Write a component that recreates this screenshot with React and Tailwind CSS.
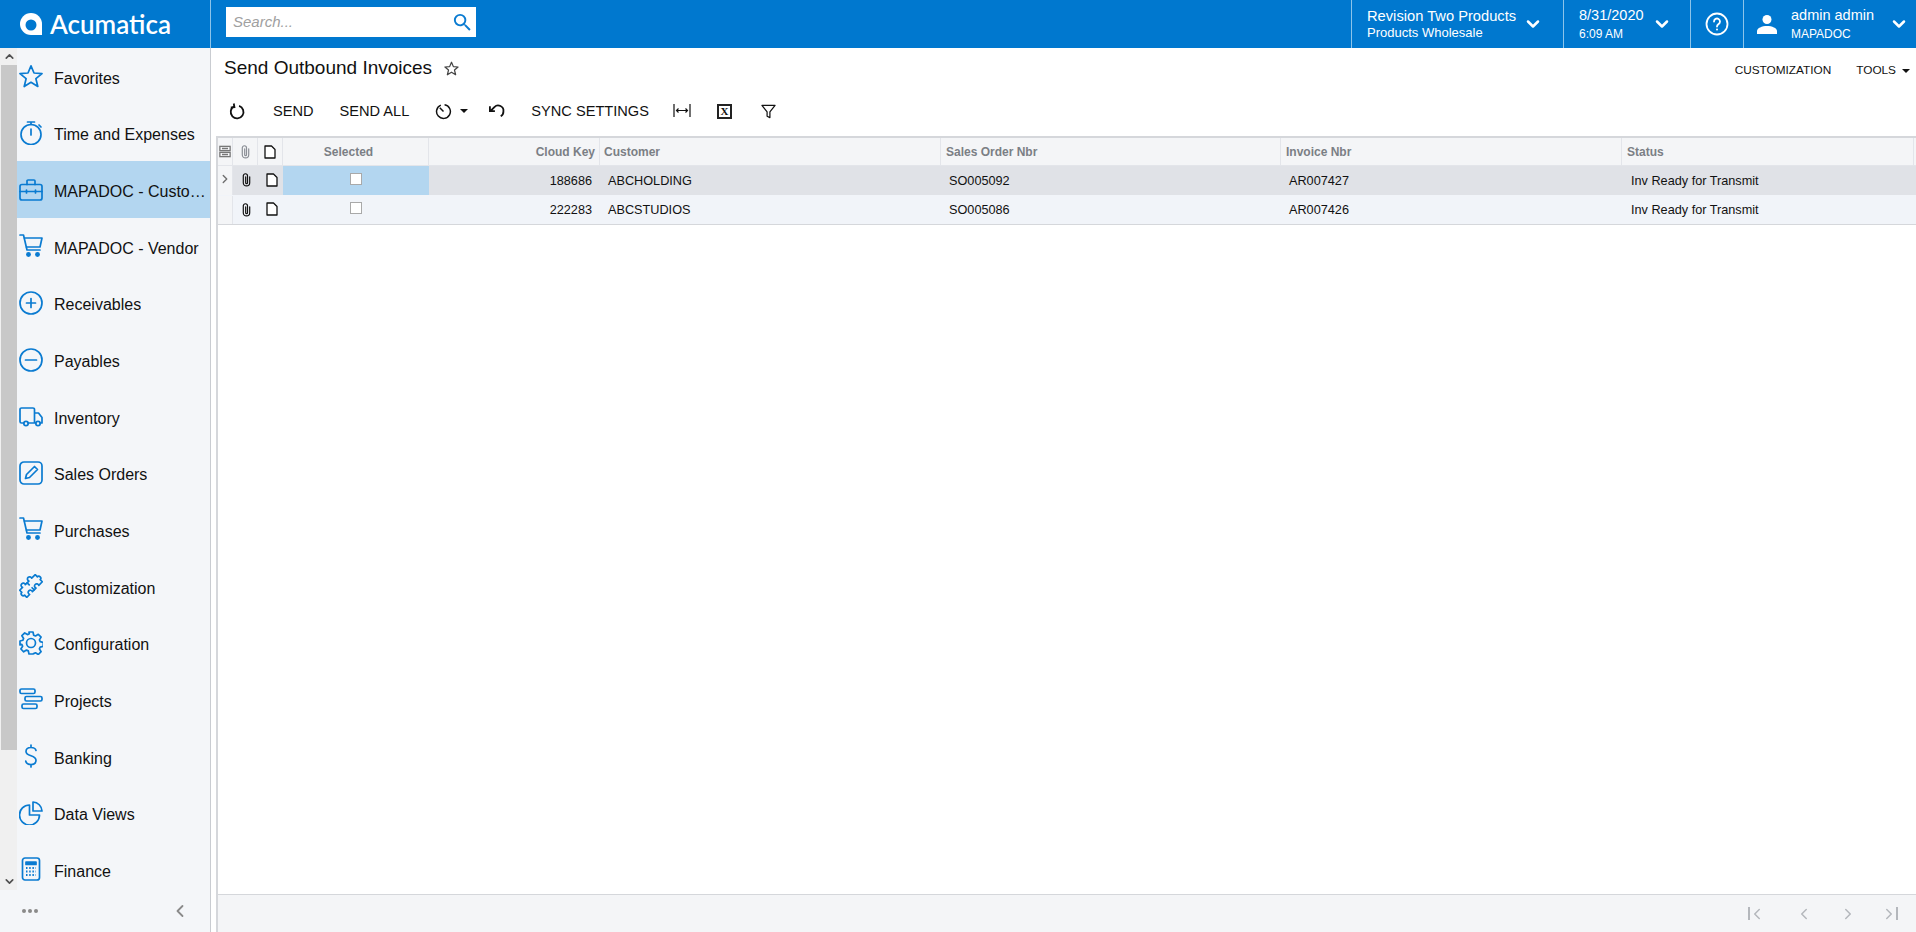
import { ChevronDown, ChevronUp, ChevronLeft, ChevronRight } from 'lucide-react'

const Ic = ({ children, className = 'h-6 w-6' }) => (
  <svg viewBox="0 0 24 24" fill="none" stroke="currentColor" strokeWidth="1.7" strokeLinecap="round" strokeLinejoin="round" className={className}>
    {children}
  </svg>
)

const cart = (
  <Ic>
    <path d="M1 1h3.500l3.500 15h13" />
    <path d="M5.500 4H23l-2 9H7.500" />
    <circle cx="9.500" cy="20.500" r="1.600" fill="currentColor" />
    <circle cx="18.500" cy="20.500" r="1.600" fill="currentColor" />
  </Ic>
)

const menu = [
  ['Favorites', <Ic><path d="M12 1.800l3 7.200 8 .6-6.100 5.100 1.900 7.800L12 18.300 5.200 22.500l1.900-7.800L1 9.600l8-.6z" /></Ic>],
  ['Time and Expenses', <Ic><circle cx="12" cy="13.500" r="10" /><path d="M8.500 1h7M12 1v2.500M12 8v6M20 4l2 2" /></Ic>],
  ['MAPADOC - Customization', <Ic><rect x="1" y="6.500" width="22" height="15.500" rx="2" /><path d="M8 6.500V3a1 1 0 0 1 1-1h6a1 1 0 0 1 1 1v3.500M1 13.500h6M17 13.500h6M7.500 12v3M16.500 12v3M7.500 13.500h9" /></Ic>],
  ['MAPADOC - Vendor', cart],
  ['Receivables', <Ic><circle cx="12" cy="12" r="11" /><path d="M12 7.500v9M7.500 12h9" /></Ic>],
  ['Payables', <Ic><circle cx="12" cy="12" r="11" /><path d="M6.500 12h11" /></Ic>],
  ['Inventory', <Ic className="-ml-[2px] h-6 w-7"><path d="M5 19H2.500A1.500 1.500 0 0 1 1 17.500V5.500A1.500 1.500 0 0 1 2.500 4H14a1.500 1.500 0 0 1 1.500 1.500V19H9M15.500 9h4l3.500 4.500V19h-2M15.500 19H17" /><circle cx="7" cy="19.500" r="2.200" /><circle cx="19" cy="19.500" r="2.200" /></Ic>],
  ['Sales Orders', <Ic><rect x="1" y="1" width="22" height="22" rx="4" /><path d="M6.500 17.500l1-4L15.500 5.500l3 3-8 8z" /></Ic>],
  ['Purchases', cart],
  ['Customization', <Ic><g transform="translate(12 12) rotate(-45)"><path d="M-11-5H-7a2.200 2.200 0 1 1 4 0H2a2.200 2.200 0 1 1 4 0H11V-2a2 2 0 1 1 0 4V5H6a2.200 2.200 0 1 0-4 0H-3a2.200 2.200 0 1 0-4 0H-11V2a2 2 0 1 1 0-4z" /><path d="M-.5-5v3M-.5 5V2" /></g></Ic>],
  ['Configuration', <Ic><circle cx="12" cy="12" r="4.500" /><path d="M10 1h4l.7 3.200 1.800.8 2.800-1.700 2.800 2.800-1.700 2.800.8 1.800 3 .7v4l-3 .7-.8 1.800 1.700 2.800-2.800 2.800-2.800-1.700-1.800.8L14 23h-4l-.7-3.100-1.800-.8-2.800 1.700-2.800-2.800 1.700-2.800-.8-1.800L1 14v-4l2.800-.7.8-1.800-1.700-2.800 2.800-2.800 2.800 1.700 1.800-.8z" /></Ic>],
  ['Projects', <Ic><rect x="1" y="2" width="15" height="4.500" rx="1.500" /><rect x="6" y="9.500" width="17" height="4.500" rx="1.500" /><rect x="3" y="17" width="15" height="4.500" rx="1.500" /></Ic>],
  ['Banking', <Ic><path d="M17 6.500C16.500 4.500 14.500 3.500 12 3.500c-3 0-5 1.500-5 4 0 2.200 2 3.300 5 4.300s5 2.200 5 4.500c0 2.500-2 4.200-5 4.200-2.700 0-4.700-1.200-5.200-3.300M12 1v2.500M12 20.500V23" /></Ic>],
  ['Data Views', <Ic><path d="M10.500 4A10 10 0 1 0 20.500 14H10.500z" /><path d="M14 1a9.500 9.500 0 0 1 9 9h-9z" /></Ic>],
  ['Finance', <Ic><rect x="3.500" y="1" width="17" height="22" rx="2.500" /><path d="M7 5h10v2.500H7z" fill="currentColor" /><path strokeWidth="2" strokeDasharray="1.500 1.700" strokeLinecap="butt" d="M7 11h10M7 14.500h10M7 18h10" /></Ic>],
]

const columns = 'grid grid-cols-[15px_25px_25px_146px_171px_341px_340px_341px_292px]'

const rows = [
  { key: '188686', customer: 'ABCHOLDING', order: 'SO005092', invoice: 'AR007427', active: true },
  { key: '222283', customer: 'ABCSTUDIOS', order: 'SO005086', invoice: 'AR007426' },
]

const Clip = ({ color }) => (
  <svg viewBox="0 0 12 16" fill="none" stroke={color} strokeWidth="1.300" strokeLinecap="round" className="h-[15px] w-[11px]">
    <path d="M9.500 5v6.500a3.500 3.500 0 0 1-7 0V4a2.300 2.300 0 0 1 4.600 0v7.500a1 1 0 0 1-2 0V5" />
  </svg>
)

const Doc = () => (
  <svg viewBox="0 0 12 14" fill="#fff" stroke="#111" strokeWidth="1.300" strokeLinejoin="round" className="h-[14px] w-[12px]">
    <path d="M1 1h6.500L11 4.500V13H1z" />
  </svg>
)

function Sidebar() {
  return (
    <aside className="flex h-full w-[211px] flex-none flex-col border-r border-[#c9ccd1] bg-[#f4f6f9]">
      <div className="flex min-h-0 flex-1">
        <div className="flex w-[17px] flex-none flex-col bg-[#f0f0f0] pl-px">
          <div className="flex h-[17px] items-center justify-center text-[#505050]">
            <ChevronUp size={13} strokeWidth={3} />
          </div>
          <div className="h-[685px] bg-[#c8c8c8]" />
          <div className="flex-1" />
          <div className="flex h-[17px] items-center justify-center text-[#505050]">
            <ChevronDown size={13} strokeWidth={3} />
          </div>
        </div>
        <nav className="min-w-0 flex-1 overflow-hidden">
          {menu.map(([label, icon], i) => (
            <div
              key={label}
              className={`flex h-[56.650px] items-center pl-[2px] pr-1 ${i === 2 ? 'bg-[#b3d6f0]' : ''}`}
            >
              <span className="flex w-[35px] flex-none justify-start text-[#0a7bd1]">{icon}</span>
              <span className="mt-[5px] truncate text-[16px] text-[#111]">{label}</span>
            </div>
          ))}
        </nav>
      </div>
      <div className="flex h-[42px] flex-none items-center justify-between pl-[22px] pr-[20px] text-[#8a8a8a]">
        <span className="flex gap-[2px]">
          <i className="h-1 w-1 rounded-full bg-[#8a8a8a]" />
          <i className="h-1 w-1 rounded-full bg-[#8a8a8a]" />
          <i className="h-1 w-1 rounded-full bg-[#8a8a8a]" />
        </span>
        <ChevronLeft size={20} strokeWidth={2.200} />
      </div>
    </aside>
  )
}

function TopBar() {
  return (
    <header className="flex h-12 flex-none items-stretch bg-[#0078cf] text-white">
      <div className="flex w-[211px] flex-none items-center gap-2 border-r border-[#8cc4ea] pl-5">
        <svg viewBox="0 0 22 22" className="h-[22px] w-[22px]">
          <path d="M11 0a11 11 0 0 1 11 11v11H11a11 11 0 0 1 0-22z" fill="#fff" />
          <circle cx="11" cy="12" r="5.500" fill="#0078cf" />
        </svg>
        <span className="font-['Lato',sans-serif] text-[26px] leading-none font-semibold">Acumatica</span>
      </div>
      <div className="ml-[15px] mt-[7px] flex h-[30px] w-[250px] items-center justify-between bg-white pl-[7px] pr-[2px]">
        <span className="text-[15px] italic text-[#a0a0a0]">Search...</span>
        <svg viewBox="0 0 24 24" fill="#0a7bd1" className="h-[23px] w-[23px]">
          <path d="M15.500 14h-.79l-.28-.27A6.471 6.471 0 0 0 16 9.500 6.500 6.500 0 1 0 9.500 16c1.610 0 3.090-.59 4.230-1.570l.27.28v.79l5 4.990L20.490 19l-4.990-5zm-6 0C7.010 14 5 11.990 5 9.500S7.010 5 9.500 5 14 7.010 14 9.500 11.990 14 9.500 14z" />
        </svg>
      </div>
      <div className="ml-auto flex items-stretch">
        <div className="flex w-[212px] items-center border-l border-[#8cc4ea] pl-[15px]">
          <div className="w-[156px] leading-none">
            <div className="text-[14.700px]">Revision Two Products</div>
            <div className="mt-[3px] text-[13px]">Products Wholesale</div>
          </div>
          <ChevronDown size={20} strokeWidth={3} />
        </div>
        <div className="flex w-[127px] items-center border-l border-[#8cc4ea] pl-[15px]">
          <div className="w-[73px] leading-none">
            <div className="text-[14.500px]">8/31/2020</div>
            <div className="mt-[5px] text-[12px]">6:09 AM</div>
          </div>
          <ChevronDown size={20} strokeWidth={3} />
        </div>
        <div className="flex w-[53px] items-center justify-center border-l border-[#8cc4ea]">
          <svg viewBox="0 0 24 24" fill="none" stroke="currentColor" strokeWidth="1.800" className="h-6 w-6">
            <circle cx="12" cy="12" r="10.500" />
            <path d="M9 9.500a3 3 0 1 1 4.500 2.600c-1 .6-1.500 1.100-1.500 2.400" strokeLinecap="round" />
            <circle cx="12" cy="17.500" r="1" fill="currentColor" stroke="none" />
          </svg>
        </div>
        <div className="flex w-[173px] items-center border-l border-[#8cc4ea] pl-[13px]">
          <svg viewBox="0 0 20 20" fill="currentColor" className="mr-[14px] h-5 w-5">
            <circle cx="10" cy="5.500" r="4.500" />
            <path d="M0 20v-3c0-3 5-5 10-5s10 2 10 5v3z" />
          </svg>
          <div className="w-[98px] leading-none">
            <div className="text-[14.500px]">admin admin</div>
            <div className="mt-[5px] text-[12px]">MAPADOC</div>
          </div>
          <ChevronDown size={20} strokeWidth={3} />
        </div>
      </div>
    </header>
  )
}

function Toolbar() {
  const text = 'mt-[2px] text-[14.600px] text-[#111]'
  return (
    <div className="flex h-[26px] items-center text-[#111]">
      <svg viewBox="0 0 16 16" fill="none" stroke="currentColor" strokeWidth="1.700" className="ml-[18px] h-[17px] w-[17px]">
        <path d="M4.800 3.200A6 6 0 1 0 9.500 2.800" />
        <path d="M4.500 0.500l.6 3.400-3.400.3" />
      </svg>
      <span className={`ml-[27px] ${text}`}>SEND</span>
      <span className={`ml-[26px] ${text}`}>SEND ALL</span>
      <svg viewBox="0 0 16 16" fill="none" stroke="currentColor" strokeWidth="1.400" className="ml-[26px] h-[17px] w-[17px]">
        <path d="M5.500 2A6.500 6.500 0 1 0 9 1.600M4.500 4.500L8 8" />
      </svg>
      <i className="ml-[8px] h-0 w-0 border-x-[4px] border-t-[4px] border-x-transparent border-t-[#111]" />
      <svg viewBox="0 0 16 16" fill="none" stroke="currentColor" strokeWidth="1.700" className="ml-[20px] h-[17px] w-[17px]">
        <path d="M2.500 7.500L6 3.800A5 5 0 0 1 14.500 8a5 5 0 0 1-2.500 4.500M1.800 3v4.700h4.700" />
      </svg>
      <span className={`ml-[26px] ${text}`}>SYNC SETTINGS</span>
      <svg viewBox="0 0 18 16" fill="none" stroke="currentColor" strokeWidth="1.200" className="ml-[24px] h-4 w-[18px]">
        <path d="M1 1v13M17 1v13M3.500 7.500h11M5.500 5.500l-2 2 2 2M12.500 5.500l2 2-2 2" />
      </svg>
      <span className="ml-[26px] flex h-[15px] w-[15px] items-center justify-center border-2 border-[#222] font-['Liberation_Serif',serif] text-[11px] leading-none font-bold">X</span>
      <svg viewBox="0 0 16 16" fill="none" stroke="currentColor" strokeWidth="1.300" className="ml-[29px] h-[15px] w-[15px]">
        <path d="M1 1.500h14L9.500 8.500v6l-3-1.500V8.500z" strokeLinejoin="round" />
      </svg>
    </div>
  )
}

function Grid() {
  const head = 'flex items-center border-r border-[#e3e5ea] text-[12px] font-bold text-[#7b7f85]'
  return (
    <div className="ml-[5px] flex min-h-0 flex-1 flex-col border-t-2 border-l-2 border-[#d5d7db]">
      <div className={`${columns} h-[28px] flex-none border-b border-[#e3e5ea] bg-[#f4f5f7]`}>
        <div className={`${head} justify-center`}>
          <svg viewBox="0 0 14 14" fill="none" stroke="#777" strokeWidth="1.500" className="h-[13px] w-[12px]">
            <rect x="1" y="1" width="12" height="5" /><rect x="1" y="8" width="12" height="5" /><path d="M3.500 3.500h7M3.500 10.500h7" />
          </svg>
        </div>
        <div className={`${head} justify-center`}><Clip color="#8b8f96" /></div>
        <div className={`${head} justify-center`}><Doc /></div>
        <div className={`${head} justify-center pr-[14px]`}>Selected</div>
        <div className={`${head} justify-end pr-[4px]`}>Cloud Key</div>
        <div className={`${head} pl-[4px]`}>Customer</div>
        <div className={`${head} pl-[5px]`}>Sales Order Nbr</div>
        <div className={`${head} pl-[5px]`}>Invoice Nbr</div>
        <div className={`${head} pl-[5px]`}>Status</div>
      </div>
      {rows.map((row) => {
        const pad = row.active ? 'pt-[3px]' : 'pt-px'
        return (
          <div
            key={row.key}
            className={`${columns} h-[29px] flex-none text-[12.700px] text-[#111] ${row.active ? 'bg-[#e0e2e7]' : 'border-t border-[#f1f4f9] bg-[#f1f4f9]'}`}
          >
            <div className="flex items-center justify-center border-r border-[#e3e5ea] bg-[#f4f5f7] pb-[4px] text-[#6f6f6f]">
              {row.active && <ChevronRight size={14} strokeWidth={2.400} />}
            </div>
            <div className="flex items-center justify-center pb-[2px] pl-[2px]"><Clip color="#111" /></div>
            <div className="flex items-center justify-center pb-[2px] pl-[2px]"><Doc /></div>
            <div className={`flex items-center justify-center ${row.active ? 'bg-[#b3d6f0]' : ''}`}>
              <span className="mb-[4px] h-[12px] w-[12px] border border-[#a9a9a9] bg-white" />
            </div>
            <div className={`flex items-center justify-end pr-[8px] ${pad}`}>{row.key}</div>
            <div className={`flex items-center pl-[8px] ${pad}`}>{row.customer}</div>
            <div className={`flex items-center pl-[8px] ${pad}`}>{row.order}</div>
            <div className={`flex items-center pl-[8px] ${pad}`}>{row.invoice}</div>
            <div className={`flex items-center pl-[9px] ${pad}`}>Inv Ready for Transmit</div>
          </div>
        )
      })}
      <div className="flex-1 border-t border-[#d5d7db] bg-white" />
    </div>
  )
}

function Pager() {
  const color = 'text-[#b4b7bc]'
  return (
    <div className="ml-[5px] flex h-[38px] flex-none items-center justify-end gap-[26px] border-t border-l-2 border-[#d5d7db] bg-[#f4f5f7] pr-[18px]">
      <span className={`flex items-center ${color}`}><i className="h-[13px] w-[2px] bg-[#b4b7bc]" /><ChevronLeft size={18} strokeWidth={2} className="-ml-[2px]" /></span>
      <ChevronLeft size={18} strokeWidth={2} className={`${color} ml-[3px]`} />
      <ChevronRight size={18} strokeWidth={2} className={color} />
      <span className={`-ml-[3px] flex items-center ${color}`}><ChevronRight size={18} strokeWidth={2} className="-mr-[2px]" /><i className="h-[13px] w-[2px] bg-[#b4b7bc]" /></span>
    </div>
  )
}

export default function App() {
  return (
    <div className="flex h-[932px] w-[1916px] flex-col overflow-hidden bg-white font-['Liberation_Sans',Arial,sans-serif]">
      <TopBar />
      <div className="flex min-h-0 flex-1">
        <Sidebar />
        <main className="flex min-w-0 flex-1 flex-col">
          <div className="flex h-[40px] flex-none items-center pl-[13px]">
            <h1 className="text-[19px] text-[#111]">Send Outbound Invoices</h1>
            <svg viewBox="0 0 24 24" fill="none" stroke="#444" strokeWidth="2" strokeLinejoin="round" className="ml-[12px] h-[15px] w-[15px]">
              <path d="M12 2l3 7 7.500.6-5.700 4.900 1.800 7.500L12 18l-6.600 4 1.800-7.500L1.500 9.600 9 9z" />
            </svg>
            <span className="ml-auto mt-[5px] text-[11.800px] text-[#111]">CUSTOMIZATION</span>
            <span className="ml-[25px] mt-[5px] text-[11.800px] text-[#111]">TOOLS</span>
            <i className="ml-[6px] mr-[6px] mt-[5px] h-0 w-0 border-x-[4px] border-t-[4px] border-x-transparent border-t-[#111]" />
          </div>
          <div className="mt-[10px] flex-none"><Toolbar /></div>
          <div className="mt-[12px] flex min-h-0 flex-1 flex-col">
            <Grid />
            <Pager />
          </div>
        </main>
      </div>
    </div>
  )
}
